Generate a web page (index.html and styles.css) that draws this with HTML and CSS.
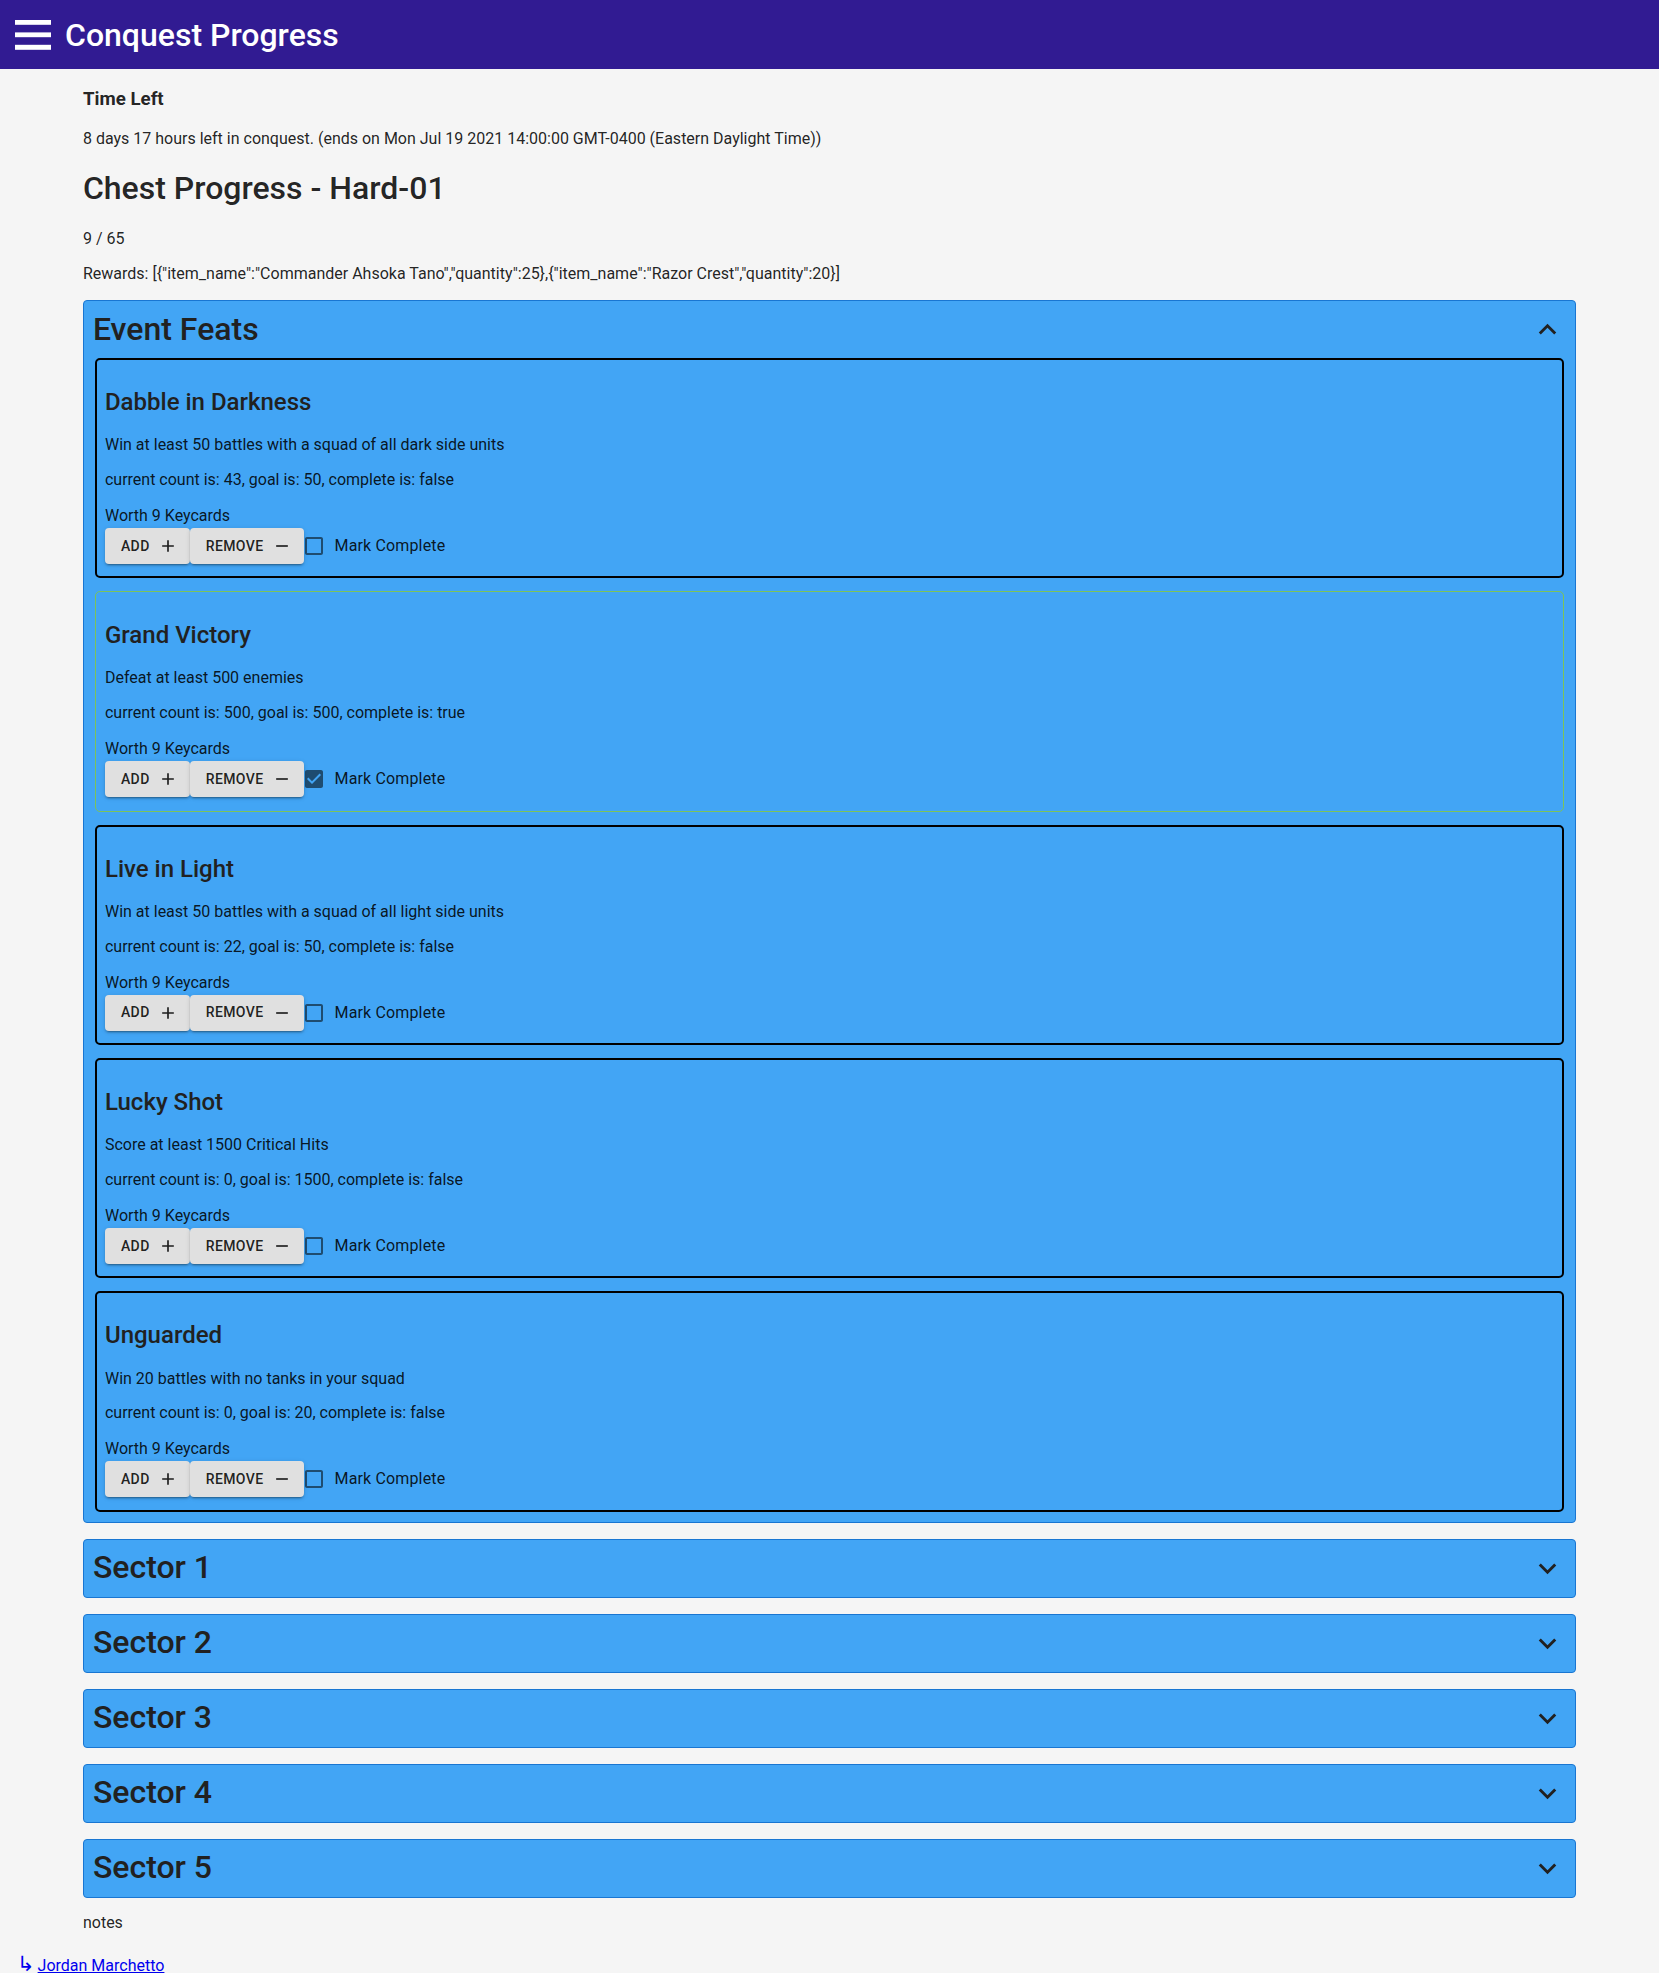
FILE: index.html
```html
<!DOCTYPE html>
<html lang="en">
<head>
<meta charset="utf-8">
<title>Conquest Progress</title>
<link rel="stylesheet" href="styles.css">
</head>
<body>
<header class="app-bar">
  <svg class="menu-icon" width="36" height="30" viewBox="0 0 36 30" aria-hidden="true">
    <rect x="0" y="0" width="36" height="4.8" fill="#fff"/>
    <rect x="0" y="12.4" width="36" height="4.8" fill="#fff"/>
    <rect x="0" y="24.8" width="36" height="5" fill="#fff"/>
  </svg>
  <h1 class="app-title">Conquest Progress</h1>
</header>

<main class="page">
  <h3 class="time-label">Time Left</h3>
  <p>8 days 17 hours left in conquest. (ends on Mon Jul 19 2021 14:00:00 GMT-0400 (Eastern Daylight Time))</p>
  <h1 class="chest-title">Chest Progress - Hard-01</h1>
  <p>9 / 65</p>
  <p>Rewards: [{"item_name":"Commander Ahsoka Tano","quantity":25},{"item_name":"Razor Crest","quantity":20}]</p>

  <section class="accordion">
    <div class="summary">
      <h1 class="summary-title">Event Feats</h1>
      <svg class="chevron" viewBox="0 0 24 24" aria-hidden="true"><path d="M12 8l-6 6 1.41 1.41L12 10.83l4.59 4.58L18 14z"/></svg>
    </div>
    <div class="details">

      <div class="feat">
        <h2 class="feat-title">Dabble in Darkness</h2>
        <p>Win at least 50 battles with a squad of all dark side units</p>
        <p>current count is: 43, goal is: 50, complete is: false</p>
        <div class="worth">Worth 9 Keycards</div>
        <div class="feat-actions">
          <button class="btn">ADD<svg class="btn-icon" viewBox="0 0 24 24"><path d="M19 13h-6v6h-2v-6H5v-2h6V5h2v6h6v2z"/></svg></button>
          <button class="btn">REMOVE<svg class="btn-icon" viewBox="0 0 24 24"><path d="M19 13H5v-2h14v2z"/></svg></button>
          <label class="check">
            <span class="check-box"><svg viewBox="0 0 24 24"><path d="M19 5v14H5V5h14m0-2H5c-1.11 0-2 .9-2 2v14c0 1.1.89 2 2 2h14c1.11 0 2-.9 2-2V5c0-1.1-.89-2-2-2z"/></svg></span>
            <span class="check-label">Mark Complete</span>
          </label>
        </div>
      </div>

      <div class="feat feat-done">
        <h2 class="feat-title">Grand Victory</h2>
        <p>Defeat at least 500 enemies</p>
        <p>current count is: 500, goal is: 500, complete is: true</p>
        <div class="worth">Worth 9 Keycards</div>
        <div class="feat-actions">
          <button class="btn">ADD<svg class="btn-icon" viewBox="0 0 24 24"><path d="M19 13h-6v6h-2v-6H5v-2h6V5h2v6h6v2z"/></svg></button>
          <button class="btn">REMOVE<svg class="btn-icon" viewBox="0 0 24 24"><path d="M19 13H5v-2h14v2z"/></svg></button>
          <label class="check">
            <span class="check-box"><svg viewBox="0 0 24 24"><path d="M19 3H5c-1.11 0-2 .9-2 2v14c0 1.1.89 2 2 2h14c1.11 0 2-.9 2-2V5c0-1.1-.89-2-2-2zm-9 14l-5-5 1.41-1.41L10 14.17l7.59-7.59L19 8l-9 9z"/></svg></span>
            <span class="check-label">Mark Complete</span>
          </label>
        </div>
      </div>

      <div class="feat">
        <h2 class="feat-title">Live in Light</h2>
        <p>Win at least 50 battles with a squad of all light side units</p>
        <p>current count is: 22, goal is: 50, complete is: false</p>
        <div class="worth">Worth 9 Keycards</div>
        <div class="feat-actions">
          <button class="btn">ADD<svg class="btn-icon" viewBox="0 0 24 24"><path d="M19 13h-6v6h-2v-6H5v-2h6V5h2v6h6v2z"/></svg></button>
          <button class="btn">REMOVE<svg class="btn-icon" viewBox="0 0 24 24"><path d="M19 13H5v-2h14v2z"/></svg></button>
          <label class="check">
            <span class="check-box"><svg viewBox="0 0 24 24"><path d="M19 5v14H5V5h14m0-2H5c-1.11 0-2 .9-2 2v14c0 1.1.89 2 2 2h14c1.11 0 2-.9 2-2V5c0-1.1-.89-2-2-2z"/></svg></span>
            <span class="check-label">Mark Complete</span>
          </label>
        </div>
      </div>

      <div class="feat">
        <h2 class="feat-title">Lucky Shot</h2>
        <p>Score at least 1500 Critical Hits</p>
        <p>current count is: 0, goal is: 1500, complete is: false</p>
        <div class="worth">Worth 9 Keycards</div>
        <div class="feat-actions">
          <button class="btn">ADD<svg class="btn-icon" viewBox="0 0 24 24"><path d="M19 13h-6v6h-2v-6H5v-2h6V5h2v6h6v2z"/></svg></button>
          <button class="btn">REMOVE<svg class="btn-icon" viewBox="0 0 24 24"><path d="M19 13H5v-2h14v2z"/></svg></button>
          <label class="check">
            <span class="check-box"><svg viewBox="0 0 24 24"><path d="M19 5v14H5V5h14m0-2H5c-1.11 0-2 .9-2 2v14c0 1.1.89 2 2 2h14c1.11 0 2-.9 2-2V5c0-1.1-.89-2-2-2z"/></svg></span>
            <span class="check-label">Mark Complete</span>
          </label>
        </div>
      </div>

      <div class="feat">
        <h2 class="feat-title">Unguarded</h2>
        <p>Win 20 battles with no tanks in your squad</p>
        <p>current count is: 0, goal is: 20, complete is: false</p>
        <div class="worth">Worth 9 Keycards</div>
        <div class="feat-actions">
          <button class="btn">ADD<svg class="btn-icon" viewBox="0 0 24 24"><path d="M19 13h-6v6h-2v-6H5v-2h6V5h2v6h6v2z"/></svg></button>
          <button class="btn">REMOVE<svg class="btn-icon" viewBox="0 0 24 24"><path d="M19 13H5v-2h14v2z"/></svg></button>
          <label class="check">
            <span class="check-box"><svg viewBox="0 0 24 24"><path d="M19 5v14H5V5h14m0-2H5c-1.11 0-2 .9-2 2v14c0 1.1.89 2 2 2h14c1.11 0 2-.9 2-2V5c0-1.1-.89-2-2-2z"/></svg></span>
            <span class="check-label">Mark Complete</span>
          </label>
        </div>
      </div>

    </div>
  </section>

  <section class="accordion">
    <div class="summary">
      <h1 class="summary-title">Sector 1</h1>
      <svg class="chevron" viewBox="0 0 24 24" aria-hidden="true"><path d="M16.59 8.59L12 13.17 7.41 8.59 6 10l6 6 6-6z"/></svg>
    </div>
  </section>
  <section class="accordion">
    <div class="summary">
      <h1 class="summary-title">Sector 2</h1>
      <svg class="chevron" viewBox="0 0 24 24" aria-hidden="true"><path d="M16.59 8.59L12 13.17 7.41 8.59 6 10l6 6 6-6z"/></svg>
    </div>
  </section>
  <section class="accordion">
    <div class="summary">
      <h1 class="summary-title">Sector 3</h1>
      <svg class="chevron" viewBox="0 0 24 24" aria-hidden="true"><path d="M16.59 8.59L12 13.17 7.41 8.59 6 10l6 6 6-6z"/></svg>
    </div>
  </section>
  <section class="accordion">
    <div class="summary">
      <h1 class="summary-title">Sector 4</h1>
      <svg class="chevron" viewBox="0 0 24 24" aria-hidden="true"><path d="M16.59 8.59L12 13.17 7.41 8.59 6 10l6 6 6-6z"/></svg>
    </div>
  </section>
  <section class="accordion">
    <div class="summary">
      <h1 class="summary-title">Sector 5</h1>
      <svg class="chevron" viewBox="0 0 24 24" aria-hidden="true"><path d="M16.59 8.59L12 13.17 7.41 8.59 6 10l6 6 6-6z"/></svg>
    </div>
  </section>

  <p class="notes">notes</p>
</main>

<footer class="footer">
  <span class="footer-arrow">↳</span><a class="footer-link" href="#">Jordan Marchetto</a>
</footer>
</body>
</html>
```

FILE: styles.css
```css
html, body {
  margin: 0;
  padding: 0;
}

body {
  background: #f5f5f5;
  color: rgba(0, 0, 0, 0.87);
  font-family: Roboto, "Liberation Sans", sans-serif;
  font-size: 16px;
  line-height: 1.18;
}

/* App bar */
.app-bar {
  height: 69px;
  background: #311b92;
  display: flex;
  align-items: center;
  padding-left: 15px;
  box-sizing: border-box;
}

.menu-icon {
  display: block;
  margin-top: 1px;
}

.app-title {
  margin: 0 0 0 14px;
  color: #fff;
  font-size: 32px;
  font-weight: 500;
  line-height: 1;
}

/* Page content */
.page {
  margin: 0 5%;
}

.page p {
  margin: 16px 0;
}

.time-label {
  font-size: 18.72px;
  font-weight: 700;
  margin: 19px 0 20px;
}

.chest-title {
  font-size: 32px;
  font-weight: 500;
  margin: 21.5px 0 22px;
}

/* Accordions */
.accordion {
  background: #42a5f5;
  border: 1px solid #1976d2;
  border-radius: 4px;
  margin: 16px 0;
}

.summary {
  min-height: 57px;
  display: flex;
  align-items: center;
  justify-content: space-between;
  padding: 0 10px 0 9px;
}

.summary-title {
  margin: 0;
  font-size: 32px;
  font-weight: 500;
  color: #212121;
}

.chevron {
  width: 35px;
  height: 35px;
  fill: #212121;
  display: block;
}

.details {
  padding: 0 11px 10px;
  display: flex;
  flex-direction: column;
  gap: 13px;
}

/* Feat cards */
.feat {
  border: 2px solid #000;
  border-radius: 5px;
  padding: 8px 8px 9.5px;
  box-sizing: border-box;
}

.feat-done {
  border: 1px solid #7cc35a;
  padding: 9px 9px 10.5px;
}

.feat-title {
  font-size: 24px;
  font-weight: 500;
  margin: 19.92px 0;
  color: #212121;
}

.page .feat p {
  margin: 16px 0;
}

.page .feat h2 + p {
  margin-top: 19.92px;
}

.worth {
  line-height: 19px;
}

.feat-actions {
  display: flex;
  align-items: center;
  height: 42px;
}

.btn {
  display: inline-flex;
  align-items: center;
  height: 36px;
  box-sizing: border-box;
  padding: 6px 16px;
  border: 0;
  border-radius: 4px;
  background: #e0e0e0;
  color: rgba(0, 0, 0, 0.87);
  font-family: Roboto, "Liberation Sans", sans-serif;
  font-size: 14px;
  font-weight: 500;
  letter-spacing: 0.4px;
  line-height: 24.5px;
  box-shadow: 0 3px 1px -2px rgba(0, 0, 0, 0.2), 0 2px 2px 0 rgba(0, 0, 0, 0.14), 0 1px 5px 0 rgba(0, 0, 0, 0.12);
  cursor: pointer;
}

.btn-icon {
  width: 20px;
  height: 20px;
  margin-left: 8px;
  margin-right: -4px;
  fill: rgba(0, 0, 0, 0.87);
}

.check {
  display: inline-flex;
  align-items: center;
  margin-left: -11px;
  cursor: pointer;
}

.check-box {
  display: inline-flex;
  padding: 9px;
}

.check-box svg {
  width: 24px;
  height: 24px;
  fill: rgba(0, 0, 0, 0.54);
  display: block;
}

.check-label {
  font-size: 16px;
  line-height: 24px;
  letter-spacing: 0.15px;
}

.page p.notes {
  margin: 16px 0;
}

/* Footer */
.footer {
  margin-top: 20px;
  padding-left: 17px;
  line-height: 22px;
  display: flex;
  align-items: baseline;
}

.footer-arrow {
  color: #0000ee;
  font-family: "DejaVu Sans", sans-serif;
  font-size: 21px;
  margin-right: 3px;
}

.footer-link {
  color: #0000ee;
}
```
